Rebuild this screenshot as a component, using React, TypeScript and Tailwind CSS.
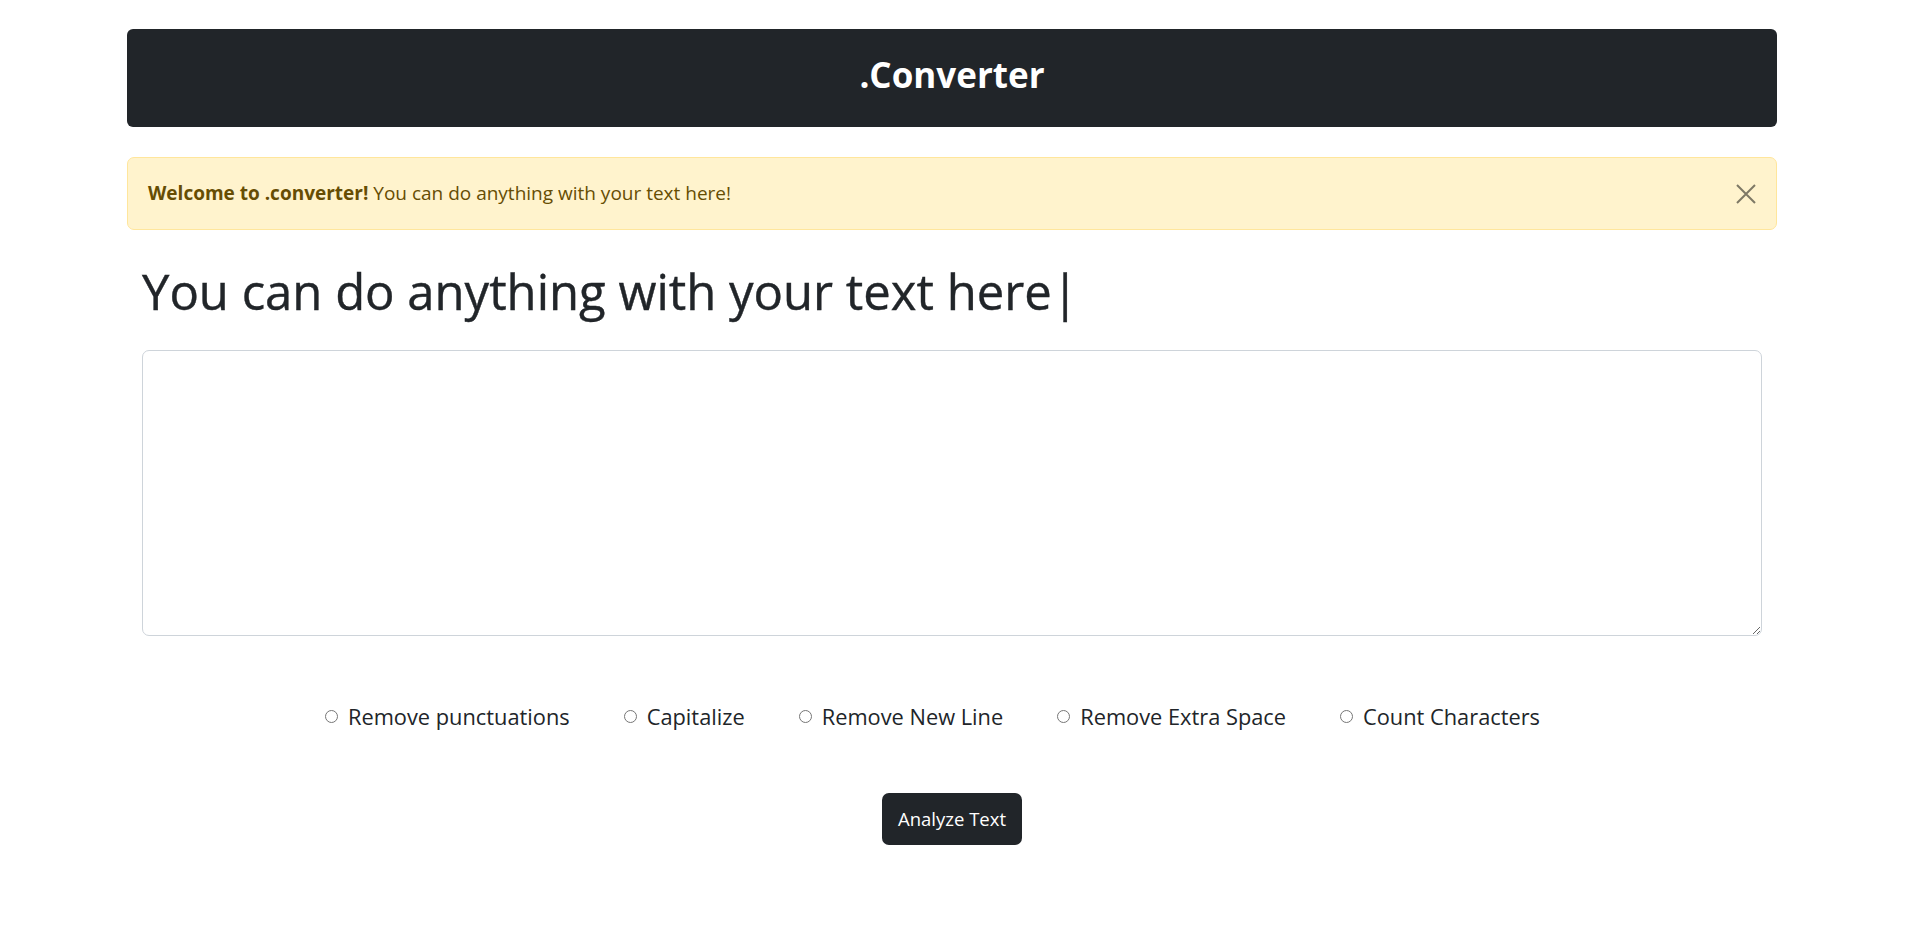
import React from 'react';

const options = [
  "Remove punctuations",
  "Capitalize",
  "Remove New Line",
  "Remove Extra Space",
  "Count Characters",
];

const App: React.FC = () => {
  return (
    <div className="min-h-screen bg-white pt-[29px] pl-[127px] pr-[130px] font-['Open_Sans',sans-serif] text-[#212529]">
      {/* Navbar */}
      <div className="h-[98px] bg-[#212529] rounded-[6px] flex items-center justify-center pb-[7px]">
        <h1 className="text-white text-[35px] font-bold leading-none">.Converter</h1>
      </div>

      {/* Alert */}
      <div className="mt-[30px] bg-[#fff3cd] border border-[#ffe69c] rounded-[7px] pl-[20px] pr-[20px] py-[20px] flex items-center justify-between text-[#664d03]">
        <p className="text-[19px] leading-[31px]">
          <strong className="font-bold">Welcome to .converter!</strong> You can do anything with your text here!
        </p>
        <button className="w-[20px] h-[20px] opacity-50" aria-label="Close">
          <svg viewBox="0 0 20 20" width="20" height="20" fill="none" stroke="#000" strokeWidth="2">
            <path d="M1 1L19 19M19 1L1 19" />
          </svg>
        </button>
      </div>

      <div className="px-[15px]">
        <h2 className="mt-[32px] text-[49px] leading-[58px] font-normal [-webkit-text-stroke:0.4px_#212529]">
          You can do anything with your text here|
        </h2>

        <textarea className="mt-[30px] block w-full h-[286px] border border-[#ced4da] rounded-[7px] p-3 outline-none" />
      </div>

      {/* Options */}
      <div className="mt-[64px] flex justify-center items-center gap-[54px] pr-[39px]">
        {options.map((opt, i) => (
          <label key={i} className="flex items-center gap-[10px] text-[21.8px] leading-[33px]">
            <input type="radio" name="op" className="m-0 w-[13px] h-[13px]" />
            <span>{opt}</span>
          </label>
        ))}
      </div>

      <div className="mt-[60px] flex justify-center">
        <button className="h-[52px] px-[16px] bg-[#212529] text-white rounded-[7px] text-[18.5px] leading-none">
          Analyze Text
        </button>
      </div>
    </div>
  );
};

export default App;
